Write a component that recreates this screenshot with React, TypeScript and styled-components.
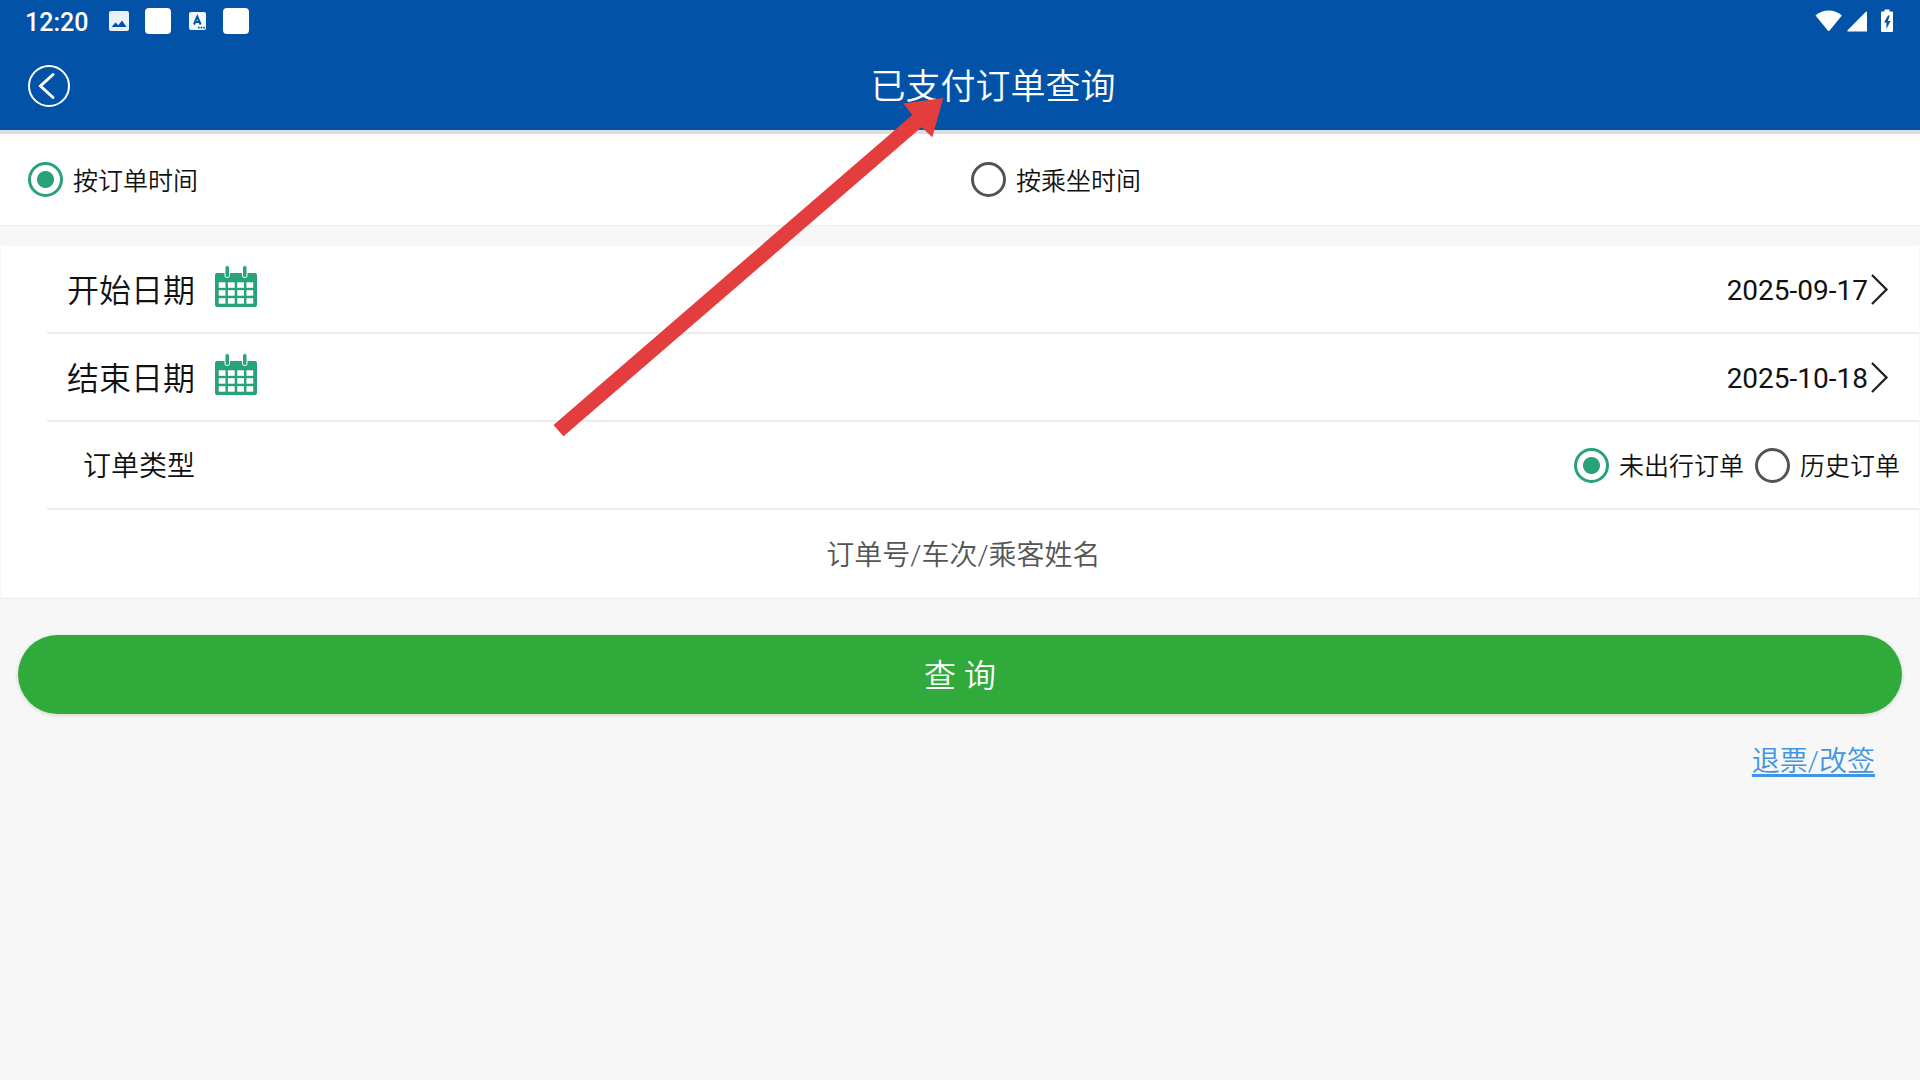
import React, { useState } from "react";
import styled, { createGlobalStyle } from "styled-components";

const color = {
  brand: "#0253a8",
  teal: "#27a27b",
  green: "#31aa3c",
  link: "#4094e4",
  page: "#f7f7f7",
  line: "#ececec",
  text: "#111111",
  ring: "#545454",
};

const GlobalStyle = createGlobalStyle`
  * { box-sizing: border-box; }
  body {
    margin: 0;
    background: ${color.page};
    color: ${color.text};
    font-family: Roboto, "Noto Sans CJK SC", sans-serif;
    font-weight: 350;
  }
  button, input { font: inherit; color: inherit; }
`;

const Page = styled.div`
  position: relative;
  min-height: 100vh;
  overflow-x: hidden;
`;

const TopBar = styled.header`
  background: ${color.brand};
  color: #fff;
  border-bottom: 4px solid #dcdfe2;
`;

const StatusBar = styled.div`
  display: flex;
  align-items: center;
  justify-content: space-between;
  height: 42px;
  padding: 0 17px 0 25px;
`;

const StatusGroup = styled.div<{ $gap: number }>`
  display: flex;
  align-items: center;
  gap: ${(p) => p.$gap}px;
`;

const Clock = styled.time`
  margin-right: 5px;
  padding-top: 3px;
  font-size: 25px;
  font-weight: 500;
  line-height: 40px;
`;

const AppTile = styled.span`
  width: 26px;
  height: 26px;
  border-radius: 4px;
  background: #fff;
`;

const TitleRow = styled.div`
  display: flex;
  align-items: center;
  height: 88px;
  padding: 0 4px 0 28px;
`;

const BackButton = styled.button`
  display: flex;
  padding: 0;
  border: 0;
  background: none;
`;

const Title = styled.h1`
  flex: 1;
  margin: 0;
  padding-top: 3px;
  text-align: center;
  font-size: 35px;
  line-height: 52px;
  font-weight: inherit;
`;

const ModeBar = styled.fieldset`
  display: grid;
  grid-template-columns: 1fr 1fr;
  align-items: center;
  height: 92px;
  margin: 0 0 20px;
  padding: 0 6px 0 28px;
  border: 0;
  border-bottom: 1px solid ${color.line};
  background: #fff;
`;

const RadioLabel = styled.label`
  display: flex;
  align-items: center;
  gap: 10px;
  font-size: 25px;
  line-height: 36px;
`;

const RadioText = styled.span`
  padding-top: 4px;
`;

const RadioInput = styled.input`
  appearance: none;
  flex: none;
  width: 35px;
  height: 35px;
  margin: 0;
  border: 3px solid ${color.ring};
  border-radius: 50%;
  &:checked {
    border-color: ${color.teal};
    background: radial-gradient(circle, ${color.teal} 8px, transparent 9px);
  }
`;

const Form = styled.form`
  display: block;
`;

const Panel = styled.div`
  margin: 0 1px;
  padding-left: 46px;
  border-bottom: 1px solid ${color.line};
  background: #fff;
`;

const Row = styled.div`
  display: flex;
  align-items: center;
  justify-content: space-between;
  height: 88px;
  padding: 0 19px 0 20px;
  border-bottom: 2px solid ${color.line};
  &:last-child {
    border-bottom: 0;
  }
`;

const DateLabel = styled.span`
  display: flex;
  align-items: center;
  gap: 20px;
  font-size: 32px;
  line-height: 48px;
`;

const RowText = styled.span`
  padding-top: 4px;
`;

const DateButton = styled.button`
  display: flex;
  align-items: center;
  gap: 3px;
  padding: 0 11px 0 0;
  border: 0;
  background: none;
  font-size: 28px;
  font-weight: 400;
  line-height: 48px;
`;

const TypeLabel = styled.span`
  padding: 4px 0 0 16px;
  font-size: 28px;
  line-height: 40px;
`;

const TypeChoices = styled.div`
  display: flex;
  gap: 11px;
`;

const Keyword = styled.input`
  width: 100%;
  padding: 3px 0 0;
  border: 0;
  outline: 0;
  background: none;
  text-align: center;
  font-size: 28px;
  line-height: 40px;
  &::placeholder {
    color: #555;
    opacity: 1;
  }
`;

const KeywordRow = styled(Row)`
  padding: 0 39px 0 0;
`;

const Actions = styled.div`
  display: flex;
  flex-direction: column;
  align-items: flex-end;
  gap: 28px;
  padding: 36px 18px;
`;

const Submit = styled.button`
  width: 100%;
  height: 79px;
  padding: 3px 0 0;
  border: 0;
  border-radius: 40px;
  background: ${color.green};
  color: #fff;
  font-size: 32px;
  line-height: 48px;
  box-shadow: 0 1px 4px rgba(0, 0, 0, 0.16);
`;

const RefundLink = styled.a`
  margin-right: 27px;
  color: ${color.link};
  font-size: 28px;
  line-height: 40px;
  text-decoration: underline;
  text-decoration-thickness: 3px;
  text-underline-offset: 3px;
  text-decoration-skip-ink: none;
`;

const Pointer = styled.svg`
  position: absolute;
  left: 553px;
  top: 97px;
  pointer-events: none;
`;

const PictureIcon = () => (
  <svg width="20" height="20" viewBox="0 0 20 20" aria-hidden="true">
    <rect width="20" height="20" rx="2" fill="#e9f1fa" />
    <path d="M2.5 16 6.5 11.5 9.3 14.3 13 9.5 17.5 16Z" fill={color.brand} />
  </svg>
);

const KeyboardIcon = () => (
  <svg width="20" height="20" viewBox="0 0 20 20" aria-hidden="true">
    <rect x="2" y="1" width="17" height="18" rx="2" fill="#f2f7fc" />
    <path d="M7 13.5 10.3 5.5 13.6 13.5M8.2 11H12.4" fill="none" stroke={color.brand} strokeWidth="2" />
    <path d="M11 16.6h1.6m1 0h1.6m1 0h1.6" stroke={color.brand} strokeWidth="1.6" />
  </svg>
);

const WifiIcon = () => (
  <svg width="28" height="22" viewBox="0 0 28 22" aria-hidden="true">
    <path d="M.5 5.6C4.3 2 9 .5 13.7 .5S23 2 26.900 5.600L14.400 20.700Q13.700 21.400 13 20.700Z" fill="#fff" />
  </svg>
);

const SignalIcon = () => (
  <svg width="20" height="22" viewBox="0 0 20 22" aria-hidden="true">
    <path d="M20 2.200V21.500H1Q-.3 21.300 .6 20.200L18.600 2Q19.800 1 20 2.200Z" fill="#fff" />
  </svg>
);

const BatteryIcon = () => (
  <svg width="32" height="24" viewBox="0 0 32 24" aria-hidden="true">
    <path d="M13.500 .5h5v2H21q1 0 1 1v18.500q0 1-1 1H11q-1 0-1-1V3.500q0-1 1-1h2.500Z" fill="#fff" />
    <path d="M17 6.500 13 13.500h2.400V20l4.100-8h-2.600l1.800-5.500Z" fill={color.brand} />
  </svg>
);

const BackIcon = () => (
  <svg width="42" height="42" viewBox="0 0 42 42" fill="none" stroke="#fff" aria-hidden="true">
    <circle cx="21" cy="21" r="20" strokeWidth="2" />
    <path d="M25 9.500 12.500 21 25 32.500" strokeWidth="3" strokeLinecap="round" />
  </svg>
);

const CalendarIcon = () => (
  <svg width="42" height="48" viewBox="0 2 42 48" aria-hidden="true">
    <rect y="10" width="42" height="34" rx="2" fill={color.teal} />
    {[12, 29.500].map((x) => (
      <rect key={x} x={x - 2.500} y="1" width="5.500" height="14" rx="2.700" fill="#fff" />
    ))}
    {[12, 29.500].map((x) => (
      <rect key={x} x={x - 1.500} y="3" width="3.500" height="11" rx="1.500" fill={color.teal} />
    ))}
    {[19.300, 27.200, 35.200].map((y) =>
      [3.700, 12.900, 22.200, 31.400].map((x) => (
        <rect key={`${x}-${y}`} x={x} y={y} width="6.800" height="5.500" fill="#fff" />
      ))
    )}
  </svg>
);

const ChevronIcon = () => (
  <svg width="18" height="32" viewBox="0 0 18 32" fill="none" stroke="#222" aria-hidden="true">
    <path d="M1 2 15.500 16.500 1 31" strokeWidth="2.300" />
  </svg>
);

type RadioProps = {
  name: string;
  text: string;
  checked: boolean;
  onSelect: () => void;
};

function Radio({ name, text, checked, onSelect }: RadioProps) {
  return (
    <RadioLabel>
      <RadioInput type="radio" name={name} checked={checked} onChange={onSelect} />
      <RadioText>{text}</RadioText>
    </RadioLabel>
  );
}

function DateRow({ id, label, value }: { id: string; label: string; value: string }) {
  return (
    <Row>
      <DateLabel id={id}>
        <RowText>{label}</RowText>
        <CalendarIcon />
      </DateLabel>
      <DateButton type="button" aria-describedby={id}>
        <RowText>{value}</RowText>
        <ChevronIcon />
      </DateButton>
    </Row>
  );
}

const MODES = ["按订单时间", "按乘坐时间"];
const TYPES = ["未出行订单", "历史订单"];

export default function App() {
  const [mode, setMode] = useState(MODES[0]);
  const [type, setType] = useState(TYPES[0]);

  return (
    <Page>
      <GlobalStyle />
      <TopBar>
        <StatusBar>
          <StatusGroup $gap={16}>
            <Clock>12:20</Clock>
            <PictureIcon />
            <AppTile />
            <KeyboardIcon />
            <AppTile />
          </StatusGroup>
          <StatusGroup $gap={4}>
            <WifiIcon />
            <SignalIcon />
            <BatteryIcon />
          </StatusGroup>
        </StatusBar>
        <TitleRow>
          <BackButton type="button" aria-label="返回">
            <BackIcon />
          </BackButton>
          <Title>已支付订单查询</Title>
        </TitleRow>
      </TopBar>

      <Form onSubmit={(e) => e.preventDefault()}>
        <ModeBar>
          {MODES.map((m) => (
            <Radio key={m} name="mode" text={m} checked={mode === m} onSelect={() => setMode(m)} />
          ))}
        </ModeBar>

        <Panel>
          <DateRow id="start-date" label="开始日期" value="2025-09-17" />
          <DateRow id="end-date" label="结束日期" value="2025-10-18" />
          <Row role="radiogroup" aria-labelledby="order-type">
            <TypeLabel id="order-type">订单类型</TypeLabel>
            <TypeChoices>
              {TYPES.map((t) => (
                <Radio key={t} name="type" text={t} checked={type === t} onSelect={() => setType(t)} />
              ))}
            </TypeChoices>
          </Row>
          <KeywordRow>
            <Keyword type="text" placeholder="订单号/车次/乘客姓名" aria-label="订单号/车次/乘客姓名" />
          </KeywordRow>
        </Panel>

        <Actions>
          <Submit type="submit">查 询</Submit>
          <RefundLink href="#refund">退票/改签</RefundLink>
        </Actions>
      </Form>

      <Pointer width="392" height="342" viewBox="553 97 392 342" aria-hidden="true">
        <path d="M943.300 98 903.300 103.500 912.300 115 553.500 425 563.500 436.200 921.500 127.300 932.300 137.300Z" fill="#e43d3d" />
      </Pointer>
    </Page>
  );
}
